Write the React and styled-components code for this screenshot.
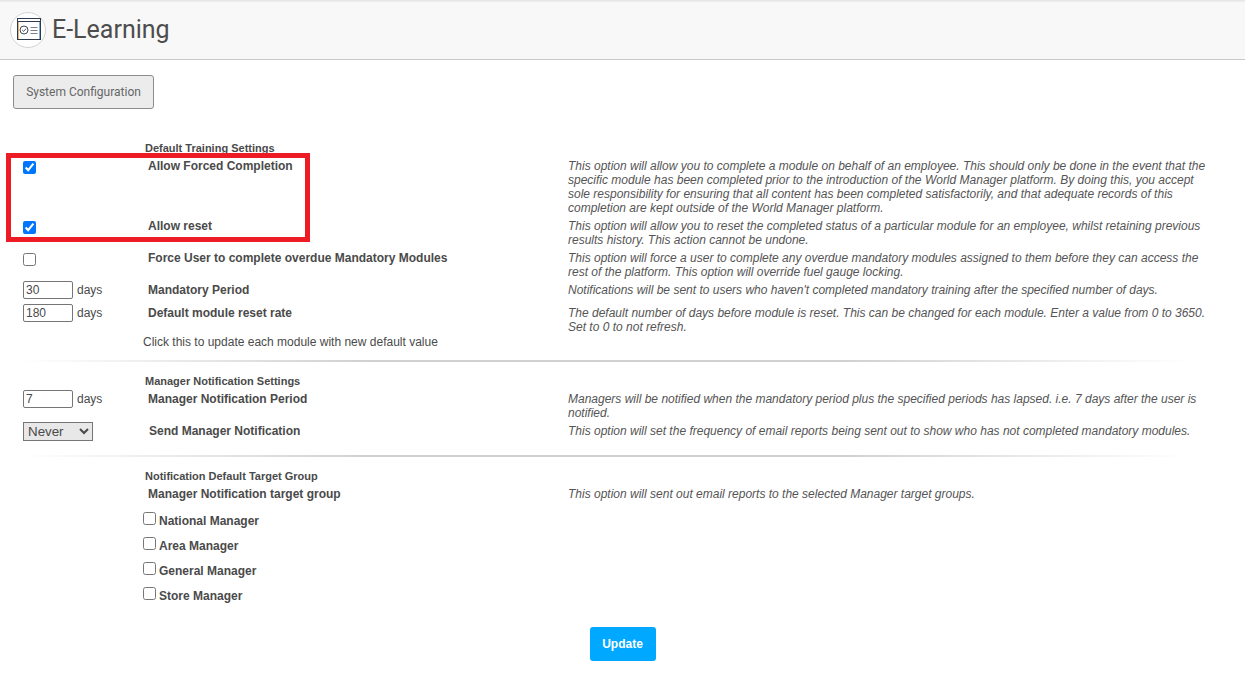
import React from "react";
import styled, { createGlobalStyle } from "styled-components";

const Global = createGlobalStyle`
  html, body { margin: 0; padding: 0; background: #fff; }
  body { font-family: "Liberation Sans", Arial, sans-serif; color: #4a4a4a; font-size: 12px; }
`;
const Page = styled.div`
  position: relative;
  width: 1245px;
  height: 676px;
  overflow: hidden;
`;
const Header = styled.header`
  height: 60px;
  box-sizing: border-box;
  background: #f8f8f8;
  border-top: 1px solid #e6e6e6;
  border-bottom: 1px solid #c9c9c9;
  box-shadow: inset 0 1px 1px #eeeeee;
  display: flex;
  align-items: center;
  padding-left: 10px;
  gap: 6px;
`;
const Logo = styled.div`
  width: 36px;
  height: 36px;
  box-sizing: border-box;
  border-radius: 50%;
  border: 1px solid #d4d4d4;
  background: #fff;
  display: flex;
  align-items: center;
  justify-content: center;
`;
const LogoArt = styled.svg`
  display: block;
  flex: none;
  margin: 0 0 2px 2px;
`;
const Title = styled.h1`
  margin: 0 0 2px;
  font: 400 25px Roboto, "Liberation Sans", sans-serif;
  color: #4d4d4d;
`;
const Content = styled.main`
  padding: 15px 0 0 13px;
`;
const ConfigButton = styled.button`
  display: block;
  width: 141px;
  height: 34px;
  box-sizing: border-box;
  background: #ececec;
  border: 1px solid #8c8c8c;
  border-radius: 3px;
  color: #666;
  font: 400 12px Roboto, "Liberation Sans", sans-serif;
  padding: 0;
`;
const Section = styled.section`
  padding-left: 23px;
  margin-top: ${(p) => p.$top || 0}px;
`;
const Heading = styled.div`
  margin-left: 122px;
  margin-bottom: ${(p) => p.$gap}px;
  font-weight: 700;
  font-size: 11px;
  line-height: 12px;
  color: #4a4a4a;
`;
const Row = styled.div`
  display: grid;
  grid-template-columns: 125px 420px 640px;
  height: ${(p) => p.$h}px;
`;
const Control = styled.div`
  display: flex;
  align-items: flex-start;
  gap: 4px;
  padding-top: ${(p) => p.$top || 0}px;
`;
const Check = styled.input.attrs({ type: "checkbox" })`
  margin: 0;
  width: 13px;
  height: 13px;
  accent-color: #0075ff;
`;
const NumberBox = styled.input`
  width: 50px;
  height: 18px;
  box-sizing: border-box;
  border: 1px solid #767676;
  border-radius: 2px;
  padding: 0 2px;
  font: 12px "Liberation Sans", sans-serif;
  color: #4a4a4a;
  margin: -2px 0 0;
`;
const Unit = styled.span`
  font-size: 12px;
  line-height: 18px;
  margin-top: -2px;
`;
const Label = styled.div`
  font-weight: 700;
  font-size: 12px;
  line-height: 14px;
  margin-left: ${(p) => p.$left || 0}px;
`;
const Desc = styled.div`
  font-style: italic;
  font-size: 12px;
  line-height: 14px;
  width: 640px;
  color: #555;
`;
const Note = styled.div`
  margin-left: 120px;
  font-size: 12px;
  line-height: 14px;
  color: #4a4a4a;
`;
const Rule = styled.hr`
  border: 0;
  height: 2px;
  width: 1170px;
  margin: ${(p) => p.$top}px 0 ${(p) => p.$bottom}px 20px;
  background: linear-gradient(90deg, #ffffff 0%, #d0d0d0 30%, #d0d0d0 70%, #ffffff 100%);
`;
const Select = styled.select`
  width: 70px;
  height: 19px;
  box-sizing: border-box;
  background: #e8e8e8;
  border: 1px solid #767676;
  border-radius: 0;
  font: 13.33px "Liberation Sans", sans-serif;
  color: #4a4a4a;
  margin: -2px 0 0;
  padding: 0;
`;
const Targets = styled.div`
  margin-left: 120px;
  margin-top: 11px;
  display: flex;
  flex-direction: column;
  gap: 7px;
`;
const Target = styled.label`
  display: flex;
  align-items: flex-start;
  gap: 3px;
  height: 18px;
  font-weight: 700;
  font-size: 12px;
  line-height: 18px;
`;
const Actions = styled.div`
  display: flex;
  justify-content: center;
  margin-top: 22px;
  width: 1245px;
`;
const Update = styled.button`
  width: 66px;
  height: 34px;
  border: 0;
  border-radius: 3px;
  background: #00a9ff;
  color: #fff;
  font-weight: 700;
  font-size: 12px;
  font-family: "Liberation Sans", sans-serif;
  padding: 0;
`;
const Highlight = styled.div`
  position: absolute;
  left: 6px;
  top: 153px;
  width: 304px;
  height: 89px;
  box-sizing: border-box;
  border: 5px solid #ed1c24;
  pointer-events: none;
`;

function CourseIcon() {
  return (
    <LogoArt width="24" height="22" viewBox="0 0 24 22" fill="none">
      <path d="M1.5 4v17" stroke="#efb26b" />
      <path d="M22.5 4v17" stroke="#7fb2e0" />
      <rect x="0.5" y="0.5" width="23" height="21" stroke="#2f3a4a" />
      <path d="M0 3.5h24" stroke="#2f3a4a" />
      <circle cx="7" cy="12" r="4" stroke="#3f4a5a" />
      <path d="M5.2 12l1.4 1.4 2.4-2.7" stroke="#4a5564" />
      <path d="M13.5 9.5h7M13.5 12.5h7M13.5 15.5h7" stroke="#7a8088" />
    </LogoArt>
  );
}

export default function App() {
  return (
    <Page>
      <Global />
      <Header>
        <Logo><CourseIcon /></Logo>
        <Title>E-Learning</Title>
      </Header>
      <Content>
        <ConfigButton>System Configuration</ConfigButton>
      </Content>
      <Section $top={33}>
        <Heading $gap={5}>Default Training Settings</Heading>
        <Row $h={60}>
          <Control $top={2}><Check defaultChecked /></Control>
          <Label>Allow Forced Completion</Label>
          <Desc>This option will allow you to complete a module on behalf of an employee. This should only be done in the event that the specific module has been completed prior to the introduction of the World Manager platform. By doing this, you accept sole responsibility for ensuring that all content has been completed satisfactorily, and that adequate records of this completion are kept outside of the World Manager platform.</Desc>
        </Row>
        <Row $h={32}>
          <Control $top={2}><Check defaultChecked /></Control>
          <Label>Allow reset</Label>
          <Desc>This option will allow you to reset the completed status of a particular module for an employee, whilst retaining previous results history. This action cannot be undone.</Desc>
        </Row>
        <Row $h={32}>
          <Control $top={2}><Check /></Control>
          <Label>Force User to complete overdue Mandatory Modules</Label>
          <Desc>This option will force a user to complete any overdue mandatory modules assigned to them before they can access the rest of the platform. This option will override fuel gauge locking.</Desc>
        </Row>
        <Row $h={23}>
          <Control><NumberBox defaultValue="30" /><Unit>days</Unit></Control>
          <Label>Mandatory Period</Label>
          <Desc>Notifications will be sent to users who haven't completed mandatory training after the specified number of days.</Desc>
        </Row>
        <Row $h={29}>
          <Control><NumberBox defaultValue="180" /><Unit>days</Unit></Control>
          <Label>Default module reset rate</Label>
          <Desc>The default number of days before module is reset. This can be changed for each module. Enter a value from 0 to 3650. Set to 0 to not refresh.</Desc>
        </Row>
        <Note>Click this to update each module with new default value</Note>
      </Section>
      <Rule $top={11} $bottom={13} />
      <Section>
        <Heading $gap={5}>Manager Notification Settings</Heading>
        <Row $h={32}>
          <Control><NumberBox defaultValue="7" /><Unit>days</Unit></Control>
          <Label>Manager Notification Period</Label>
          <Desc>Managers will be notified when the mandatory period plus the specified periods has lapsed. i.e. 7 days after the user is notified.</Desc>
        </Row>
        <Row $h={24}>
          <Control><Select defaultValue="Never"><option>Never</option></Select></Control>
          <Label $left={1}>Send Manager Notification</Label>
          <Desc>This option will set the frequency of email reports being sent out to show who has not completed mandatory modules.</Desc>
        </Row>
      </Section>
      <Rule $top={7} $bottom={13} />
      <Section>
        <Heading $gap={5}>Notification Default Target Group</Heading>
        <Row $h={14}>
          <Control />
          <Label>Manager Notification target group</Label>
          <Desc>This option will sent out email reports to the selected Manager target groups.</Desc>
        </Row>
        <Targets>
          {["National Manager", "Area Manager", "General Manager", "Store Manager"].map((t) => (
            <Target key={t}><Check />{t}</Target>
          ))}
        </Targets>
      </Section>
      <Actions><Update>Update</Update></Actions>
      <Highlight />
    </Page>
  );
}
